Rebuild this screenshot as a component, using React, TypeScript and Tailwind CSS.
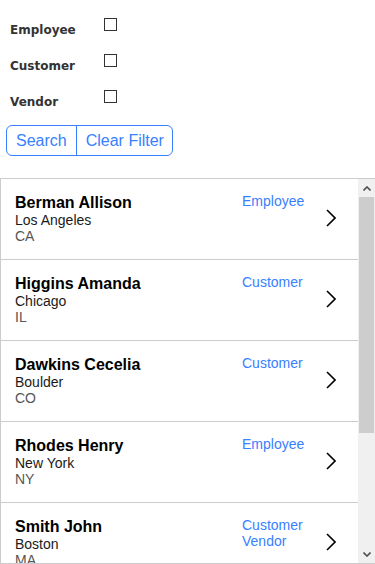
const filters = ["Employee", "Customer", "Vendor"];

const people = [
  { name: "Berman Allison", city: "Los Angeles", state: "CA", types: ["Employee"] },
  { name: "Higgins Amanda", city: "Chicago", state: "IL", types: ["Customer"] },
  { name: "Dawkins Cecelia", city: "Boulder", state: "CO", types: ["Customer"] },
  { name: "Rhodes Henry", city: "New York", state: "NY", types: ["Employee"] },
  { name: "Smith John", city: "Boston", state: "MA", types: ["Customer", "Vendor"] },
];

const Chevron = () => (
  <svg width="10" height="18" viewBox="0 0 10 18" className="mb-[3px]">
    <polyline points="1,1 9,9 1,17" fill="none" stroke="#000" strokeWidth="1.6" />
  </svg>
);

const ScrollArrow = ({ up }: { up?: boolean }) => (
  <svg width="8" height="5" viewBox="0 0 8 5">
    <polyline
      points={up ? "0.5,4.5 4,1 7.5,4.5" : "0.5,0.5 4,4 7.5,0.5"}
      fill="none"
      stroke="#505050"
      strokeWidth="1.6"
    />
  </svg>
);

const App = () => {
  return (
    <div className="w-[375px] h-[564px] bg-white overflow-hidden font-['Liberation_Sans',Arial,sans-serif]">
      <div className="flex flex-col gap-[17px] pt-[18px]">
        {filters.map((f) => (
          <div key={f} className="flex items-start">
            <span className="w-[104px] pl-[10px] mt-[5px] text-[12px] leading-[14px] font-bold text-[#333] font-['DejaVu_Sans',Verdana,sans-serif]">
              {f}
            </span>
            <span className="w-[13px] h-[13px] border border-[#333] bg-white" />
          </div>
        ))}
      </div>

      <div className="ml-[6px] mt-[16px] flex w-max h-[31px] border border-[#3880ff] rounded-[6px] text-[16px] text-[#3880ff]">
        <button className="px-[9px] flex items-center border-r border-[#3880ff]">Search</button>
        <button className="pl-[9px] pr-[8px] flex items-center">Clear Filter</button>
      </div>

      <div className="mt-[22px] h-[386px] flex border-t border-b border-l border-[#cccccc]">
        <div className="flex-1 overflow-hidden">
          {people.map((p) => (
            <div key={p.name} className="h-[81px] flex border-b border-[#cccccc] pr-[22px]">
              <div className="flex-1 pl-[14px] pt-[14px]">
                <div className="text-[16px] font-bold text-black leading-[19px]">{p.name}</div>
                <div className="text-[14px] text-[#1a1a1a] leading-[16px]">{p.city}</div>
                <div className="text-[14px] text-[#555] leading-[16px]">{p.state}</div>
              </div>
              <div className="w-[84px] pt-[14px] text-[14px] leading-[16px] text-[#3880ff]">
                {p.types.map((t) => (
                  <div key={t}>{t}</div>
                ))}
              </div>
              <div className="flex items-center">
                <Chevron />
              </div>
            </div>
          ))}
        </div>
        <div className="w-[17px] bg-[#f0f0f0] flex flex-col">
          <div className="h-[18px] flex items-center justify-center">
            <ScrollArrow up />
          </div>
          <div className="h-[236px] mx-[1px] bg-[#cdcdcd]" />
          <div className="flex-1" />
          <div className="h-[17px] flex items-center justify-center">
            <ScrollArrow />
          </div>
        </div>
      </div>
    </div>
  );
};

export default App;
